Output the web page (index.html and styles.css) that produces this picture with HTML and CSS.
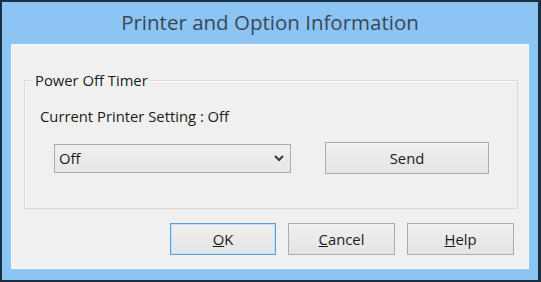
FILE: index.html
```html
<!DOCTYPE html>
<html lang="en">
<head>
    <meta charset="UTF-8">
    <title>Printer and Option Information</title>
    <link rel="stylesheet" href="styles.css">
</head>
<body>
    <div class="window">
        <div class="titlebar">Printer and Option Information</div>
        <div class="panel">
            <fieldset class="group">
                <legend>Power Off Timer</legend>
                <div class="current">Current Printer Setting : Off</div>
                <div class="row">
                    <div class="combo">
                        <span>Off</span>
                        <svg width="12" height="8" viewBox="0 0 12 8"><polyline points="2,2 6,6 10,2" fill="none" stroke="#3a3a3a" stroke-width="2"/></svg>
                    </div>
                    <button class="btn send">Send</button>
                </div>
            </fieldset>
            <div class="actions">
                <button class="btn default"><u>O</u>K</button>
                <button class="btn"><u>C</u>ancel</button>
                <button class="btn"><u>H</u>elp</button>
            </div>
        </div>
    </div>
</body>
</html>
```
FILE: styles.css
```css
body {
    margin: 0;
    background: #1e2f42;
    font-family: 'Open Sans', 'Noto Sans', sans-serif;
}
.window {
    width: 541px;
    height: 282px;
    box-sizing: border-box;
    border: 2px solid #1e2f42;
    border-right-width: 3px;
    background: #8cc4f4;
    padding: 0 9px 11px 9px;
    display: flex;
    flex-direction: column;
}
.titlebar {
    height: 42px;
    line-height: 40px;
    text-align: center;
    font-size: 20.5px;
    color: #3a4757;
}
.panel {
    flex: 1;
    background: #f0f0f0;
    border: 1px solid #f9f9f9;
    display: flex;
    flex-direction: column;
}
.group {
    margin: 26px 10px 0 12px;
    padding: 0 0 34px 0;
    border: 1px solid #dadada;
    box-shadow: 1px 1px 0 #fbfbfb inset;
    font-size: 14.8px;
    color: #1a1a1a;
}
.group legend {
    margin-left: 8px;
    padding: 0 2px;
    line-height: 18px;
}
.current {
    margin: 18px 0 17px 15px;
    line-height: 18px;
}
.row {
    display: flex;
    align-items: center;
    margin-left: 29px;
}
.combo {
    width: 237px;
    height: 29px;
    box-sizing: border-box;
    border: 1px solid #acacac;
    background: linear-gradient(#f0f0f0, #e6e6e6);
    display: flex;
    align-items: center;
    justify-content: space-between;
    padding: 0 5px 0 4px;
}
.btn {
    font-family: inherit;
    font-size: 14.8px;
    color: #1a1a1a;
    height: 32px;
    box-sizing: border-box;
    border: 1px solid #acacac;
    background: linear-gradient(#f0f0f0, #e4e4e4);
    padding: 0;
}
.send {
    width: 164px;
    margin-left: 34px;
}
.actions {
    display: flex;
    justify-content: flex-end;
    gap: 12px;
    margin-top: 14px;
    padding-right: 14px;
}
.actions .btn {
    width: 107px;
}
.actions .default {
    width: 106px;
    border-color: #5c9fdc;
    box-shadow: 0 0 0 1px #c4e0f8 inset;
}
```
